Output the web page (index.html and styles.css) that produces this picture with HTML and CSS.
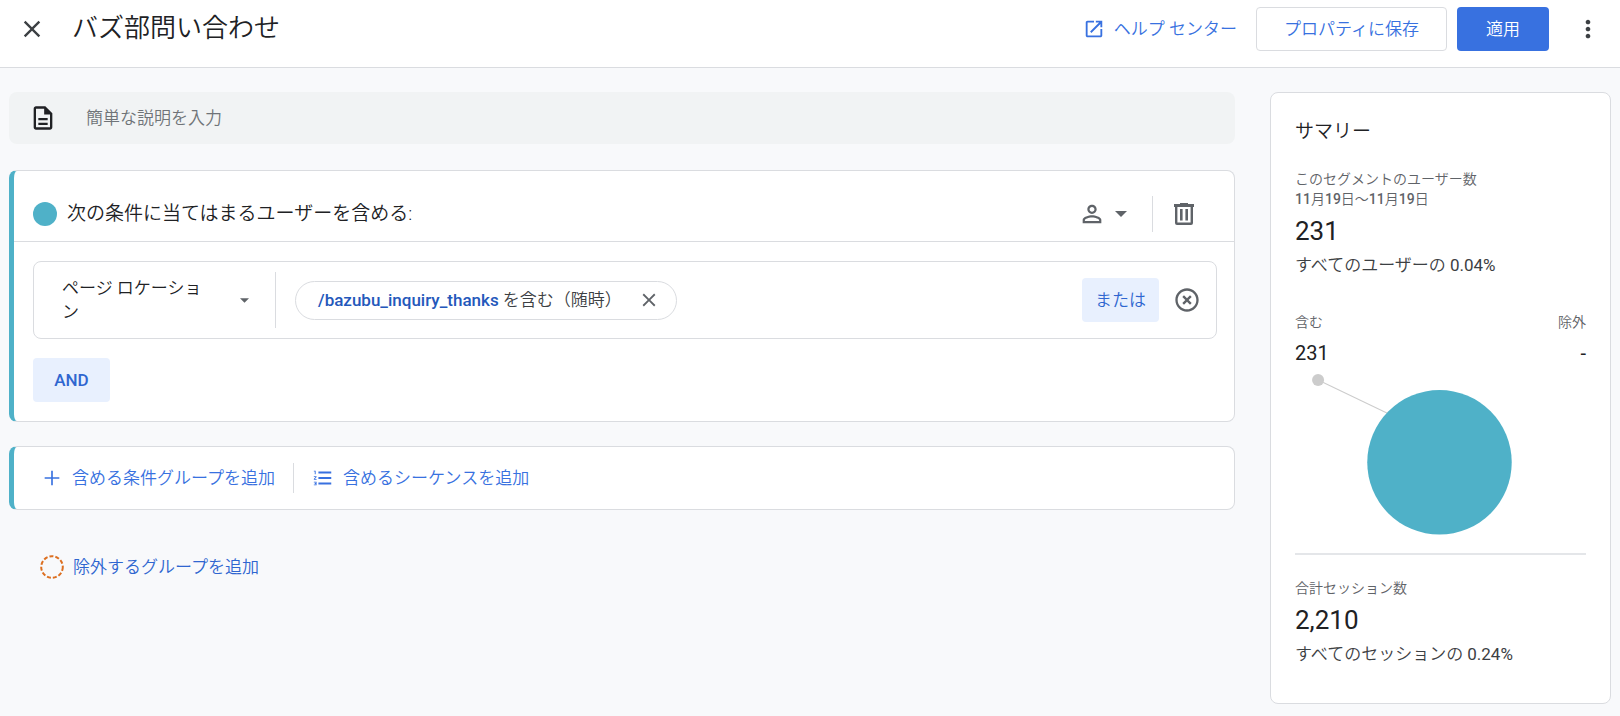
FILE: index.html
```html
<!DOCTYPE html>
<html lang="ja">
<head>
<meta charset="utf-8">
<meta name="viewport" content="width=device-width, initial-scale=1">
<title>バズ部問い合わせ</title>
<link rel="stylesheet" href="styles.css">
</head>
<body>
<header class="topbar">
  <button class="icon-btn close-btn" type="button" aria-label="閉じる">
    <svg class="icon-lg" viewBox="0 0 24 24"><path d="M19 6.41L17.59 5 12 10.59 6.41 5 5 6.41 10.59 12 5 17.59 6.41 19 12 13.41 17.59 19 19 17.59 13.41 12z"/></svg>
  </button>
  <h1 class="page-title">バズ部問い合わせ</h1>
  <a class="help-link" href="#help">
    <svg class="icon-md" viewBox="0 0 24 24"><path d="M19 19H5V5h7V3H5c-1.11 0-2 .9-2 2v14c0 1.1.89 2 2 2h14c1.1 0 2-.9 2-2v-7h-2v7zM14 3v2h3.59l-9.83 9.83 1.41 1.41L19 6.41V10h2V3h-7z"/></svg>
    <span>ヘルプ センター</span>
  </a>
  <button class="btn btn-outline" type="button">プロパティに保存</button>
  <button class="btn btn-primary" type="button">適用</button>
  <button class="icon-btn more-btn" type="button" aria-label="その他">
    <svg class="icon-lg" viewBox="0 0 24 24"><path d="M12 8c1.1 0 2-.9 2-2s-.9-2-2-2-2 .9-2 2 .9 2 2 2zm0 2c-1.1 0-2 .9-2 2s.9 2 2 2 2-.9 2-2-.9-2-2-2zm0 6c-1.1 0-2 .9-2 2s.9 2 2 2 2-.9 2-2-.9-2-2-2z"/></svg>
  </button>
</header>

<main class="layout">
  <div class="builder">
    <label class="description">
      <svg class="icon-lg" viewBox="0 0 24 24"><path d="M8 16h8v2H8zm0-4h8v2H8zm6-10H6c-1.1 0-2 .9-2 2v16c0 1.1.89 2 1.99 2H18c1.1 0 2-.9 2-2V8l-6-6zm4 18H6V4h7v5h5v11z"/></svg>
      <input class="description-input" type="text" placeholder="簡単な説明を入力" aria-label="説明">
    </label>

    <section class="card">
      <div class="group-head">
        <span class="group-dot"></span>
        <h2 class="group-title">次の条件に当てはまるユーザーを含める:</h2>
        <button class="icon-btn scope-btn" type="button" aria-label="スコープ">
          <svg class="icon-lg" viewBox="0 0 24 24"><path d="M12 5.9c1.16 0 2.1.94 2.1 2.1s-.94 2.1-2.1 2.1S9.9 9.16 9.9 8s.94-2.1 2.1-2.1m0 9c2.97 0 6.1 1.46 6.1 2.1v1.1H5.9V17c0-.64 3.13-2.1 6.1-2.1M12 4C9.79 4 8 5.79 8 8s1.79 4 4 4 4-1.79 4-4-1.79-4-4-4zm0 9c-2.67 0-8 1.34-8 4v3h16v-3c0-2.66-5.33-4-8-4z"/></svg>
          <svg class="caret" viewBox="0 0 12 6"><path d="M0 0h12L6 6z"/></svg>
        </button>
        <span class="rule"></span>
        <button class="icon-btn trash-btn" type="button" aria-label="削除">
          <svg class="trash" viewBox="0 0 20 22"><path fill-rule="evenodd" d="M6 0h8v1h6v3h-1v16a2 2 0 0 1-2 2H3a2 2 0 0 1-2-2V4H0V1h6zM3.400 4v15.600h13.200V4zM6 6h2.600v11.500H6zM11.400 6H14v11.500h-2.600z"/></svg>
        </button>
      </div>
      <div class="group-body">
        <div class="condition">
          <button class="dimension" type="button">
            <span class="dimension-name">ページ ロケーション</span>
            <svg class="caret-sm" viewBox="0 0 12 6"><path d="M0 0h12L6 6z"/></svg>
          </button>
          <div class="chip">
            <span><strong class="chip-value">/bazubu_inquiry_thanks</strong> を含む（随時）</span>
            <button class="icon-btn" type="button" aria-label="条件を削除">
              <svg class="icon-md" viewBox="0 0 24 24"><path d="M19 6.410L17.590 5 12 10.590 6.410 5 5 6.410 10.590 12 5 17.590 6.410 19 12 13.410 17.590 19 19 17.590 13.410 12z"/></svg>
            </button>
          </div>
          <button class="btn btn-tonal or-btn" type="button">または</button>
          <button class="icon-btn" type="button" aria-label="行を削除">
            <svg class="icon-lg" viewBox="0 0 24 24"><path d="M14.59 8L12 10.59 9.41 8 8 9.41 10.59 12 8 14.59 9.41 16 12 13.41 14.59 16 16 14.59 13.41 12 16 9.41 14.59 8zM12 2C6.47 2 2 6.47 2 12s4.47 10 10 10 10-4.47 10-10S17.53 2 12 2zm0 18c-4.41 0-8-3.59-8-8s3.59-8 8-8 8 3.59 8 8-3.59 8-8 8z"/></svg>
          </button>
        </div>
        <button class="btn btn-tonal and-btn" type="button">AND</button>
      </div>
    </section>

    <section class="card add-card">
      <button class="text-btn" type="button">
        <svg class="icon-md" viewBox="0 0 24 24"><path d="M20 12.900H12.900V20h-1.800V12.900H4v-1.800h7.100V4h1.800v7.100H20z"/></svg>
        <span>含める条件グループを追加</span>
      </button>
      <span class="rule rule-short"></span>
      <button class="text-btn" type="button">
        <svg class="icon-md" viewBox="0 0 24 24"><path d="M2 17h2v.5H3v1h1v.5H2v1h3v-4H2v1zm1-9h1V4H2v1h1v3zm-1 3h1.800L2 13.100v.9h3v-1H3.200L5 10.900V10H2v1zm5-6v2h14V5H7zm0 14h14v-2H7v2zm0-6h14v-2H7v2z"/></svg>
        <span>含めるシーケンスを追加</span>
      </button>
    </section>

    <button class="text-btn exclude-btn" type="button">
      <svg class="dashed" viewBox="0 0 24 24"><circle cx="12" cy="12" r="10.800"/></svg>
      <span>除外するグループを追加</span>
    </button>
  </div>

  <aside class="summary">
    <h2 class="summary-title">サマリー</h2>
    <p class="label">このセグメントのユーザー数</p>
    <p class="label"><b class="digits">11</b>月<b class="digits">19</b>日〜<b class="digits">11</b>月<b class="digits">19</b>日</p>
    <p class="figure">231</p>
    <p class="share">すべてのユーザーの <span class="percent">0.04%</span></p>
    <div class="split">
      <div>
        <p class="label">含む</p>
        <p class="figure-sm">231</p>
      </div>
      <div class="split-end">
        <p class="label">除外</p>
        <p class="figure-sm">-</p>
      </div>
    </div>
    <svg class="chart" viewBox="0 0 290 169" role="img" aria-label="含む 231">
      <line x1="23" y1="15" x2="144" y2="73" stroke="#ccc"/>
      <circle cx="23" cy="15" r="6" fill="#ccc"/>
      <circle cx="144" cy="97" r="72" fill="#4fb1c8"/>
    </svg>
    <div class="totals">
      <p class="label">合計セッション数</p>
      <p class="figure">2,210</p>
      <p class="share">すべてのセッションの <span class="percent">0.24%</span></p>
    </div>
  </aside>
</main>
</body>
</html>
```
FILE: styles.css
```css
* {
  box-sizing: border-box;
}

body {
  margin: 0;
  min-height: 100vh;
  background: #f8f9fb;
  color: #202124;
  font-family: Roboto, "Noto Sans CJK JP", sans-serif;
  font-size: 17px;
  font-weight: 350;
  line-height: 24px;
}

h1, h2, p {
  margin: 0;
  font-weight: 350;
}

button, input {
  font: inherit;
  color: inherit;
}

button {
  padding: 0;
  border: 0;
  background: none;
  cursor: pointer;
}

svg {
  display: block;
  flex: none;
  fill: currentColor;
}

.icon-lg { width: 28px; height: 28px; }
.icon-md { width: 22px; height: 22px; }
.caret { width: 12px; height: 6px; }
.caret-sm { width: 9px; height: 5px; }
.trash { width: 20px; height: 22px; }

.icon-btn {
  display: flex;
  align-items: center;
  color: #5f6368;
}

.topbar {
  display: flex;
  align-items: center;
  padding: 7px 18px 16px;
  background: #fff;
  border-bottom: 1px solid #dadce0;
}

.close-btn, .more-btn {
  color: #3c4043;
}

.page-title {
  flex: 1;
  padding: 0 26px 3px;
  font-size: 26px;
  line-height: 36px;
}

.help-link {
  display: flex;
  align-items: center;
  gap: 9px;
  margin-right: 19px;
  color: #3871e0;
  text-decoration: none;
}

.btn {
  height: 44px;
  border-radius: 4px;
  white-space: nowrap;
}

.btn-outline {
  padding: 0 27px;
  border: 1px solid #dadce0;
  background: #fff;
  color: #3871e0;
}

.btn-primary {
  margin: 0 25px 0 10px;
  padding: 0 29px;
  background: #3871e0;
  color: #fff;
}

.btn-tonal {
  background: #e8f0fe;
  color: #2f66d0;
}

.layout {
  display: grid;
  grid-template-columns: minmax(0, 1fr) 341px;
  gap: 35px;
  align-items: start;
  padding: 24px 9px 12px;
}

.description {
  display: flex;
  align-items: center;
  gap: 29px;
  height: 52px;
  margin-bottom: 26px;
  padding: 0 20px;
  border-radius: 8px;
  background: #f1f3f4;
}

.description-input {
  flex: 1;
  min-width: 0;
  padding: 0;
  border: 0;
  outline: 0;
  background: none;
}

.description-input::placeholder {
  color: #6f7378;
  opacity: 1;
}

.card {
  margin-bottom: 24px;
  border: 1px solid #dadce0;
  border-left: 5px solid #4fb1c8;
  border-radius: 8px;
  background: #fff;
}

.group-head {
  display: flex;
  align-items: center;
  padding: 25px 40px 9px 19px;
  border-bottom: 1px solid #dadce0;
}

.group-dot {
  width: 24px;
  height: 24px;
  margin-right: 10px;
  border-radius: 50%;
  background: #4fb1c8;
}

.group-title {
  flex: 1;
  font-size: 19px;
  line-height: 36px;
}

.scope-btn {
  gap: 9px;
  margin-right: 25px;
}

.rule {
  width: 1px;
  height: 36px;
  background: #dadce0;
}

.rule-short {
  height: 30px;
}

.trash-btn {
  margin-left: 21px;
}

.group-body {
  padding: 19px 17px 19px 19px;
}

.condition {
  display: flex;
  align-items: center;
  margin-bottom: 19px;
  padding: 10px 15px 10px 0;
  border: 1px solid #dadce0;
  border-radius: 8px;
}

.dimension {
  display: flex;
  align-items: center;
  justify-content: space-between;
  width: 242px;
  height: 56px;
  padding: 0 26px 0 28px;
  border-right: 1px solid #dadce0;
  text-align: left;
  color: #5f6368;
}

.dimension-name {
  width: 150px;
  color: #202124;
  word-break: break-all;
}

.chip {
  display: flex;
  align-items: center;
  gap: 16px;
  height: 39px;
  margin: 0 auto 0 19px;
  padding: 0 16px 0 22px;
  border: 1px solid #dadce0;
  border-radius: 20px;
  color: #3c4043;
  white-space: nowrap;
}

.chip-value {
  font-weight: 500;
  color: #2458bb;
}

.or-btn {
  margin-right: 14px;
  padding: 0 13px;
}

.and-btn {
  display: block;
  min-width: 77px;
  font-weight: 500;
}

.add-card {
  display: flex;
  align-items: center;
  gap: 18px;
  padding: 16px 27px;
}

.text-btn {
  display: flex;
  align-items: center;
  gap: 9px;
  color: #3871e0;
}

.exclude-btn {
  margin: 45px 0 0 31px;
  color: #2f66d0;
}

.dashed {
  width: 24px;
  height: 24px;
  fill: none;
  stroke: #dc6f20;
  stroke-width: 2;
  stroke-dasharray: 4 2;
}

.summary {
  padding: 25px 24px 37px;
  border: 1px solid #dadce0;
  border-radius: 8px;
  background: #fff;
}

.summary-title {
  margin-bottom: 23px;
  font-size: 19px;
  line-height: 28px;
}

.label {
  font-size: 14px;
  line-height: 20px;
  color: #5f6368;
}

.digits {
  font-weight: 500;
}

.figure {
  margin: 6px 0;
  font-size: 26px;
  font-weight: 400;
  line-height: 32px;
}

.figure-sm {
  margin-top: 9px;
  font-size: 20px;
  font-weight: 400;
}

.share {
  color: #3c4043;
}

.percent {
  font-weight: 400;
}

.split {
  display: flex;
  justify-content: space-between;
  margin-top: 35px;
}

.split-end {
  text-align: right;
}

.chart {
  width: 100%;
  height: auto;
}

.totals {
  margin-top: 18px;
  padding-top: 23px;
  border-top: 2px solid #e4e6e9;
}
```
